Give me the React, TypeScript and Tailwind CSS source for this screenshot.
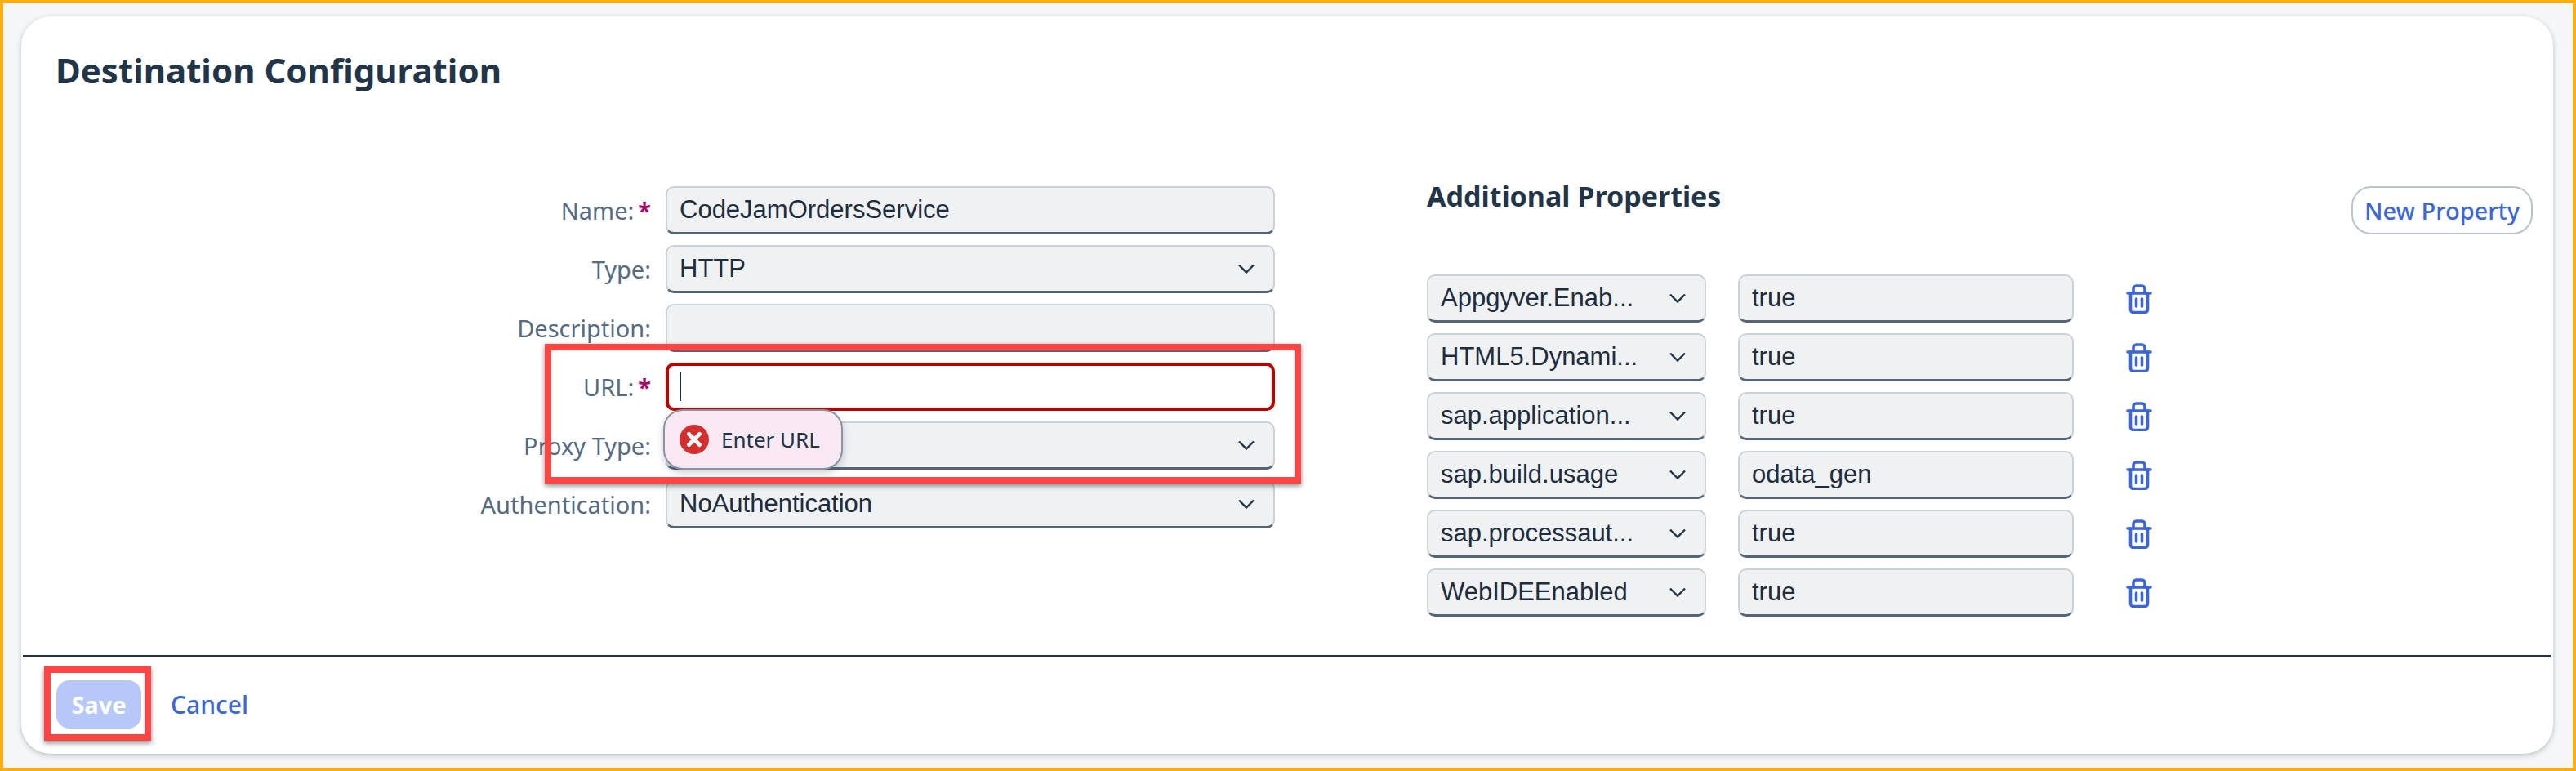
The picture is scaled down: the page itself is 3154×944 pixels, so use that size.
const fields = [
  { label: "Name:", required: true, value: "CodeJamOrdersService" },
  { label: "Type:", value: "HTTP", select: true },
  { label: "Description:", value: "" },
  { label: "URL:", required: true, value: "", error: true },
  { label: "Proxy Type:", value: "", select: true },
  { label: "Authentication:", value: "NoAuthentication", select: true },
];

const properties = [
  { name: "Appgyver.Enab...", value: "true" },
  { name: "HTML5.Dynami...", value: "true" },
  { name: "sap.application...", value: "true" },
  { name: "sap.build.usage", value: "odata_gen" },
  { name: "sap.processaut...", value: "true" },
  { name: "WebIDEEnabled", value: "true" },
];

function Chevron() {
  return (
    <svg width="22" height="14" viewBox="0 0 22 14" fill="none" className="shrink-0">
      <path d="M2 2.500 11 11.500 20 2.500" stroke="#223548" strokeWidth="2.400" />
    </svg>
  );
}

function Trash() {
  return (
    <svg width="32" height="36" viewBox="0 0 32 36" fill="none" stroke="#3b66d8" strokeWidth="3.600" strokeLinecap="round">
      <path d="M2 11H30" />
      <path d="M9 11V5.500A3.500 3.500 0 0 1 12.500 2H19.500A3.500 3.500 0 0 1 23 5.500V11" />
      <path d="M5.500 11V31A3.500 3.500 0 0 0 9 34.500H23A3.500 3.500 0 0 0 26.500 31V11" />
      <path d="M12.500 18V27M19.500 18V27" />
    </svg>
  );
}

function ErrorIcon() {
  return (
    <svg width="36" height="36" viewBox="0 0 36 36" className="shrink-0">
      <circle cx="18" cy="18" r="18" fill="#d32f2f" />
      <path d="M11.500 11.500 24.500 24.500M24.500 11.500 11.500 24.500" stroke="#fff" strokeWidth="5" strokeLinecap="round" />
    </svg>
  );
}

function FieldBox({ value, select }: { value: string; select?: boolean }) {
  return (
    <div className="h-[59px] flex items-center justify-between rounded-[10px] border-2 border-[#ccd1d6] border-b-[3px] border-b-[#556479] bg-[#eff1f3] pl-[15px] pr-[22px] text-[31px] text-[#1d2d3e] font-['Liberation_Sans',sans-serif]">
      <span className="whitespace-nowrap">{value}</span>
      {select && <Chevron />}
    </div>
  );
}

function UrlField() {
  return (
    <div className="relative h-[59px] rounded-[10px] border-4 border-[#bb0000] bg-white">
      <div className="absolute left-[13px] top-[8px] w-[2px] h-[35px] bg-[#1d2d3e]" />
      <div className="absolute z-10 left-[-7px] top-[53px] w-[220px] h-[74px] flex items-center gap-[15px] pl-[18px] rounded-[24px] border-2 border-[#8893a3] bg-[#f9e9f3] text-[26px] text-[#223548] shadow-[0_4px_10px_rgba(50,65,85,0.25)]">
        <ErrorIcon />
        <span className="whitespace-nowrap">Enter URL</span>
      </div>
    </div>
  );
}

export default function App() {
  return (
    <div className="font-['Noto_Sans',sans-serif] relative w-[3154px] h-[944px] border-4 border-[#fdae0c] bg-[#f5f6f7] pt-[16px] pl-[22px] pr-[24px] pb-[17px]">
      <div className="h-full flex flex-col rounded-[36px] bg-white shadow-[0_2px_6px_rgba(50,65,85,0.3)]">
        <div className="h-[208px] pl-[42px] pt-[38px]">
          <h1 className="text-[42px] leading-[56px] font-bold text-[#223548]">Destination Configuration</h1>
        </div>

        <div className="h-[574px] flex">
          <div className="w-[1535px] grid grid-cols-[771px_746px] gap-x-[18px] gap-y-[13px] content-start">
            {fields.map((field) => (
              <div key={field.label} className="contents">
                <div className="h-[59px] flex items-center justify-end text-[29px] text-[#556b82] whitespace-nowrap">
                  {field.label}
                  {field.required && <span className="ml-[5px] font-bold text-[#a5096b]">*</span>}
                </div>
                {field.error ? <UrlField /> : <FieldBox value={field.value} select={field.select} />}
              </div>
            ))}
          </div>

          <div className="w-[1354px] ml-[186px]">
            <div className="h-[108px] flex items-start justify-between">
              <h2 className="text-[34px] leading-[44px] -mt-[10px] font-bold text-[#223548]">Additional Properties</h2>
              <button className="w-[222px] h-[59px] rounded-[24px] border-2 border-[#bcc3ca] bg-white text-[29px] font-medium text-[#3b66d8]">
                New Property
              </button>
            </div>
            <div className="flex flex-col gap-[13px]">
              {properties.map((property) => (
                <div key={property.name} className="flex items-center">
                  <div className="w-[342px]">
                    <FieldBox value={property.name} select />
                  </div>
                  <div className="w-[411px] ml-[39px]">
                    <FieldBox value={property.value} />
                  </div>
                  <div className="ml-[64px]">
                    <Trash />
                  </div>
                </div>
              ))}
            </div>
          </div>
        </div>

        <div className="mx-[2px] h-[2px] bg-[#223548]" />

        <div className="flex items-center gap-[36px] pl-[43px] pt-[29px]">
          <button className="w-[104px] h-[59px] rounded-[16px] bg-[#b6c8f7] text-[29px] font-bold text-white">Save</button>
          <span className="text-[30px] font-medium text-[#3b66d8]">Cancel</span>
        </div>
      </div>

      <div className="absolute z-20 left-[663px] top-[417px] w-[926px] h-[171px] border-8 border-[#ff4444] shadow-[0_3px_6px_rgba(0,0,0,0.45)] pointer-events-none" />
      <div className="absolute z-20 left-[50px] top-[812px] w-[131px] h-[91px] border-8 border-[#ff4444] shadow-[0_3px_6px_rgba(0,0,0,0.45)] pointer-events-none" />
    </div>
  );
}
